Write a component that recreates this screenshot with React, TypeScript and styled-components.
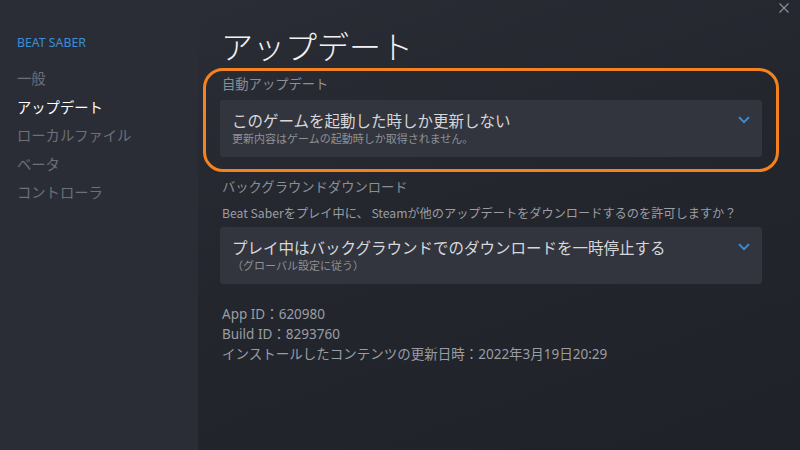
import React from "react";
import styled, { createGlobalStyle } from "styled-components";

const GlobalStyle = createGlobalStyle`
  html, body {
    margin: 0;
    padding: 0;
    background: #23262d;
  }
  body {
    font-family: "Noto Sans CJK JP", "Noto Sans", sans-serif;
  }
`;

const Window = styled.div`
  display: flex;
  width: 800px;
  height: 450px;
  overflow: hidden;
  position: relative;
`;

const Sidebar = styled.nav`
  width: 198px;
  flex-shrink: 0;
  background: #2a2d35;
  padding: 35px 0 0 17px;
  box-sizing: border-box;
  display: flex;
  flex-direction: column;
`;

const GameName = styled.div`
  color: #3b8ed8;
  font-family: "Noto Sans", sans-serif;
  font-size: 12.3px;
  line-height: 16px;
  margin-bottom: 13px;
`;

const NavItem = styled.div<{ active?: boolean }>`
  color: ${p => (p.active ? "#ffffff" : "#6c7077")};
  font-size: 14.3px;
  line-height: 28.5px;
`;

const Main = styled.main`
  flex: 1;
  background: linear-gradient(160deg, #2a2d35 0%, #23262d 45%, #1f2228 100%);
  padding: 20px 38px 0 24px;
  box-sizing: border-box;
  display: flex;
  flex-direction: column;
`;

const Title = styled.h1`
  margin: 0 0 0 -1px;
  color: #f2f2f2;
  font-weight: 300;
  font-size: 32px;
  line-height: 50px;
`;

const SectionLabel = styled.div`
  color: #8a8e95;
  font-size: 13.3px;
  line-height: 20px;
`;

const Question = styled.div`
  color: #9a9ea4;
  font-size: 12.2px;
  line-height: 18px;
  margin-top: 7px;
`;

const Dropdown = styled.div<{ top: number }>`
  margin: ${p => p.top}px 0 0 -2px;
  background: #32353d;
  border-radius: 3px;
  height: 57px;
  box-sizing: border-box;
  padding: 9px 12px 0 12px;
  display: flex;
  justify-content: space-between;
  align-items: flex-start;
`;

const DropText = styled.div`
  display: flex;
  flex-direction: column;
`;

const DropValue = styled.div`
  color: #d6d7da;
  font-size: 15.5px;
  line-height: 22px;
`;

const DropHint = styled.div`
  color: #8e9198;
  font-size: 11px;
  line-height: 14px;
`;

const Chevron = styled.svg`
  margin-top: 7px;
  flex-shrink: 0;
`;

const Info = styled.div`
  margin-top: 20px;
  display: flex;
  flex-direction: column;
`;

const InfoLine = styled.div`
  color: #9a9ea4;
  font-family: "Noto Sans", "Noto Sans CJK JP", sans-serif;
  font-size: 13.5px;
  line-height: 20px;
`;

const Gap = styled.div<{ h: number }>`
  height: ${p => p.h}px;
`;

const CloseButton = styled.svg`
  position: absolute;
  top: 3px;
  right: 11px;
`;

const Highlight = styled.div`
  position: absolute;
  left: 203px;
  top: 68px;
  width: 576px;
  height: 104px;
  box-sizing: border-box;
  border: 3px solid #f5821f;
  border-radius: 20px;
  pointer-events: none;
`;

function ChevronIcon() {
  return (
    <Chevron width="12" height="8" viewBox="0 0 12 8">
      <path d="M1 1.2 L6 6.2 L11 1.2" fill="none" stroke="#3d8fda" strokeWidth="1.8" />
    </Chevron>
  );
}

export default function App() {
  return (
    <Window>
      <GlobalStyle />
      <Sidebar>
        <GameName>BEAT SABER</GameName>
        <NavItem>一般</NavItem>
        <NavItem active>アップデート</NavItem>
        <NavItem>ローカルファイル</NavItem>
        <NavItem>ベータ</NavItem>
        <NavItem>コントローラ</NavItem>
      </Sidebar>
      <Main>
        <Title>アップデート</Title>
        <Gap h={4} />
        <SectionLabel>自動アップデート</SectionLabel>
        <Dropdown top={6}>
          <DropText>
            <DropValue>このゲームを起動した時しか更新しない</DropValue>
            <DropHint>更新内容はゲームの起動時しか取得されません。</DropHint>
          </DropText>
          <ChevronIcon />
        </Dropdown>
        <Gap h={20} />
        <SectionLabel>バックグラウンドダウンロード</SectionLabel>
        <Question>
          Beat Saberをプレイ中に、 Steamが他のアップデートをダウンロードするのを許可しますか？
        </Question>
        <Dropdown top={5}>
          <DropText>
            <DropValue>プレイ中はバックグラウンドでのダウンロードを一時停止する</DropValue>
            <DropHint>（グローバル設定に従う）</DropHint>
          </DropText>
          <ChevronIcon />
        </Dropdown>
        <Info>
          <InfoLine>App ID：620980</InfoLine>
          <InfoLine>Build ID：8293760</InfoLine>
          <InfoLine>インストールしたコンテンツの更新日時：2022年3月19日20:29</InfoLine>
        </Info>
      </Main>
      <CloseButton width="10" height="10" viewBox="0 0 10 10">
        <path d="M0.5 0.5 L9.5 9.5 M9.5 0.5 L0.5 9.5" stroke="#8a8e95" strokeWidth="1.2" />
      </CloseButton>
      <Highlight />
    </Window>
  );
}
